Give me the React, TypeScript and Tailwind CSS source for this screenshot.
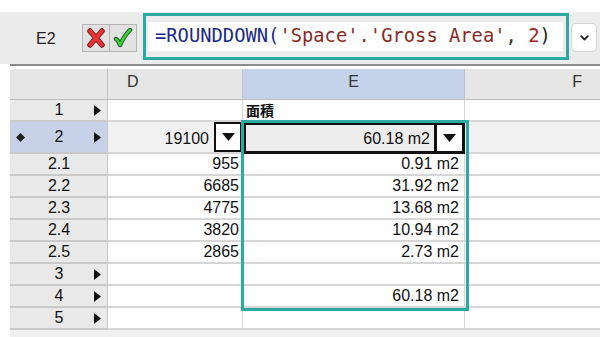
import React from "react";

type Row = {
  h: string;
  tall?: boolean;
  arrow?: boolean;
  diamond?: boolean;
  sel?: boolean;
  d?: string;
  e?: string;
  head?: boolean;
};

const rows: Row[] = [
  { h: "1", arrow: true, head: true },
  { h: "2", tall: true, arrow: true, diamond: true, sel: true },
  { h: "2.1", d: "955", e: "0.91 m2" },
  { h: "2.2", d: "6685", e: "31.92 m2" },
  { h: "2.3", d: "4775", e: "13.68 m2" },
  { h: "2.4", d: "3820", e: "10.94 m2" },
  { h: "2.5", d: "2865", e: "2.73 m2" },
  { h: "3", arrow: true },
  { h: "4", arrow: true, e: "60.18 m2" },
  { h: "5", arrow: true },
];

const Arrow = () => (
  <svg width="7" height="11" viewBox="0 0 7 11">
    <polygon points="0,0 7,5.5 0,11" fill="#111" />
  </svg>
);

const Down = () => (
  <svg width="13" height="8" viewBox="0 0 13 8">
    <polygon points="0,0 13,0 6.5,8" fill="#111" />
  </svg>
);

function DataRow({ r }: { r: Row }) {
  const rowH = r.tall ? "h-[32px]" : "h-[22px]";
  const headBg = r.sel ? "bg-[#c7d2e9]" : "bg-[#e9e9e9]";
  const cellBg = r.sel ? "bg-[#f1f1f1]" : "bg-white";
  return (
    <div className={`flex ${rowH} text-[16px] text-[#111]`}>
      <div className={`w-[98px] shrink-0 h-full flex items-center border-b-2 border-r border-[#c9c9c9] ${headBg}`}>
        <div className="w-[20px] flex justify-center">
          {r.diamond && (
            <svg width="9" height="9" viewBox="0 0 9 9">
              <polygon points="4.5,0 9,4.5 4.5,9 0,4.5" fill="#222" />
            </svg>
          )}
        </div>
        <div className="w-[58px] text-center leading-none">{r.h}</div>
        <div className="w-[19px] flex pl-[6px]">{r.arrow && <Arrow />}</div>
      </div>
      <div className={`w-[135px] shrink-0 h-full flex items-center justify-end border-b-2 border-r border-[#d6d6d6] ${cellBg}`}>
        {r.sel ? (
          <>
            <span className="pr-[5px] pt-[4px]">19100</span>
            <div className="w-[28px] h-full border-2 border-[#111] bg-white flex items-center justify-center">
              <Down />
            </div>
          </>
        ) : (
          <span className="pr-[3px]">{r.d}</span>
        )}
      </div>
      {r.sel ? (
        <div className="w-[222px] shrink-0 h-full border-[3px] border-[#111] bg-[#ededed] flex items-center justify-end">
          <span className="pr-[4px] pt-[1px]">60.18 m2</span>
          <div className="w-[28px] h-full border-l-[3px] border-[#111] bg-white flex items-center justify-center">
            <Down />
          </div>
        </div>
      ) : r.head ? (
        <div className="w-[222px] shrink-0 h-full flex items-center pl-[3px] border-b-2 border-r border-[#d6d6d6] bg-white">
          <span
            className="font-bold text-[14px] text-[#111] leading-none"
            style={{ fontFamily: '"Noto Sans CJK JP", "Noto Sans", sans-serif' }}
          >
            面積
          </span>
        </div>
      ) : (
        <div className="w-[222px] shrink-0 h-full flex items-center justify-end pr-[5px] border-b-2 border-r border-[#d6d6d6] bg-white">
          <span>{r.e}</span>
        </div>
      )}
      <div className={`w-[135px] shrink-0 h-full border-b-2 border-[#d6d6d6] ${cellBg}`} />
    </div>
  );
}

export default function App() {
  const font = { fontFamily: '"Liberation Sans", Arial, sans-serif' };
  return (
    <div className="w-[606px] h-[337px] bg-white overflow-hidden relative" style={font}>
      <div className="h-[12px]" />
      <div className="w-[600px] h-[52px] bg-[#ececec] flex items-center">
        <div className="w-[82px] text-[16px] text-[#222] pl-[36px] pt-[1px]">E2</div>
        <div className="flex h-[28px] mt-[-1px]">
          <div className="w-[28px] h-[28px] border border-[#b4b4b4] bg-[#e2e2e2] flex items-center justify-center">
            <svg width="20" height="20" viewBox="0 0 20 20">
              <path d="M4 3 L16 17 M16 3 L4 17" stroke="#7a1a1a" strokeWidth="5.5" strokeLinecap="round" />
              <path d="M4 3 L16 17 M16 3 L4 17" stroke="#e8343a" strokeWidth="3.5" strokeLinecap="round" />
            </svg>
          </div>
          <div className="w-[27px] h-[28px] border border-l-0 border-[#b4b4b4] bg-[#e2e2e2] flex items-center justify-center">
            <svg width="20" height="20" viewBox="0 0 20 20">
              <path d="M3 11 Q5 12 7 17 Q11 8 17 2" stroke="#1f5a1f" strokeWidth="4.5" fill="none" strokeLinecap="round" strokeLinejoin="round" />
              <path d="M3 11 Q5 12 7 17 Q11 8 17 2" stroke="#3ccf3c" strokeWidth="2.5" fill="none" strokeLinecap="round" strokeLinejoin="round" />
            </svg>
          </div>
        </div>
        <div className="ml-[6px] w-[426px] h-[47px] border-[3px] border-[#2aaaa3] flex items-center pl-[2px] pr-[3px] mt-[-3px]">
          <div className="flex-1 h-[29px] bg-white flex items-center pl-[7px]">
            <span
              className="text-[18.8px] whitespace-pre text-[#222]"
              style={{ fontFamily: '"DejaVu Sans Mono", "Liberation Mono", monospace' }}
            >
              <span className="text-[#1b2a88]">=ROUNDDOWN(</span>
              <span className="text-[#8a2a24]">'Space'.'Gross Area'</span>
              <span className="text-[#333]">{", "}</span>
              <span className="text-[#a8201e]">2</span>
              <span className="text-[#222]">)</span>
            </span>
          </div>
        </div>
        <div className="ml-[2px] w-[26px] h-[29px] bg-white rounded-[5px] border border-[#d4d4d4] flex items-center justify-center mt-[-1px]">
          <svg width="9" height="6" viewBox="0 0 9 6">
            <path d="M1.2 1.2 L4.5 4.5 L7.8 1.2" stroke="#222" strokeWidth="1.8" fill="none" strokeLinecap="round" strokeLinejoin="round" />
          </svg>
        </div>
      </div>
      <div className="ml-[10px] w-[590px] h-[2px] bg-[#8c8c8c]" />
      <div className="h-[3px]" />

      <div className="ml-[10px] w-[590px]">
        <div className="flex h-[31px] bg-[#e6e6e6] border-b border-[#bdbdbd] text-[16px] text-[#333]">
          <div className="w-[98px] shrink-0 border-r border-[#c4c4c4]" />
          <div className="w-[135px] shrink-0 border-r border-[#c4c4c4] flex items-end pb-[5px] pl-[19px]">D</div>
          <div className="w-[222px] shrink-0 border-r border-[#b8c0d6] bg-[#c6d1ea] flex items-end justify-center pb-[5px]">E</div>
          <div className="w-[135px] shrink-0 flex items-end justify-end pb-[5px] pr-[18px]">F</div>
        </div>
        {rows.map((r) => (
          <DataRow key={r.h} r={r} />
        ))}
        <div className="h-[7px] bg-[#f0f0f0]" />
      </div>

      <div className="absolute left-[241px] top-[120px] w-[228px] h-[191px] border-[3px] border-[#2aaaa3] pointer-events-none" />
    </div>
  );
}
